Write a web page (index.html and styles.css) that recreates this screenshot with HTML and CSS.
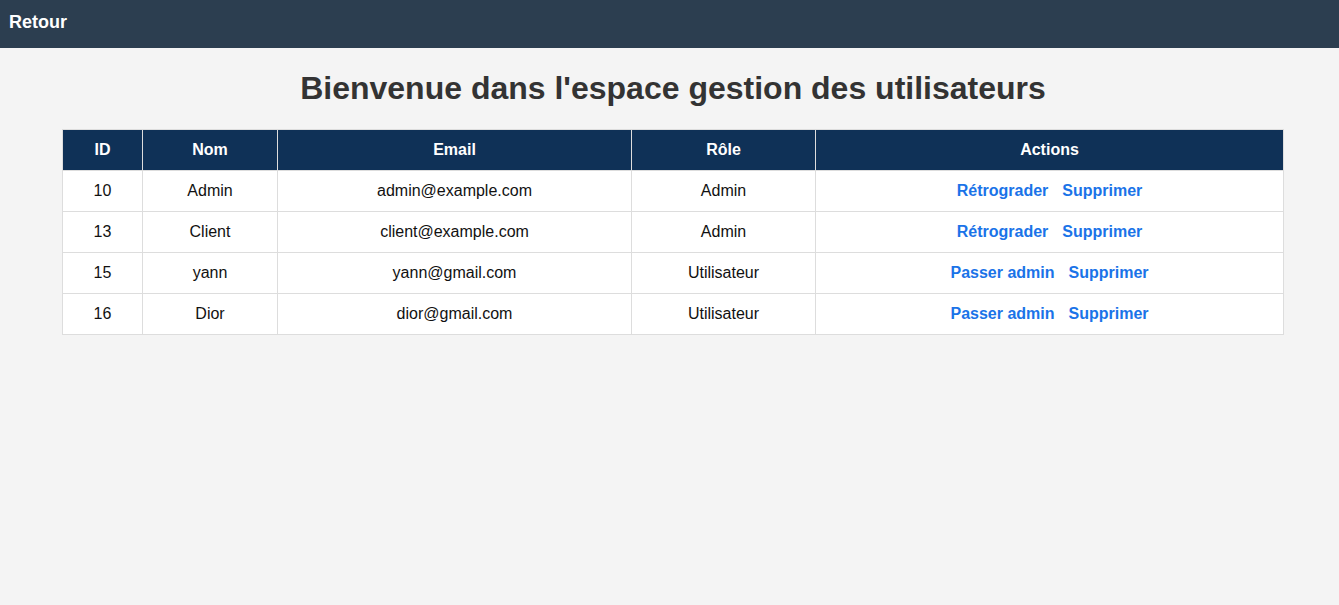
FILE: index.html
```html
<!DOCTYPE html>
<html lang="fr">
<head>
<meta charset="utf-8">
<title>Gestion des utilisateurs</title>
<link rel="stylesheet" href="styles.css">
</head>
<body>
<header class="topbar"><a class="back" href="#">Retour</a></header>
<main class="content">
  <h1 class="title">Bienvenue dans l'espace gestion des utilisateurs</h1>
  <table class="users">
    <colgroup>
      <col class="c-id"><col class="c-nom"><col class="c-email"><col class="c-role"><col class="c-actions">
    </colgroup>
    <thead>
      <tr><th>ID</th><th>Nom</th><th>Email</th><th>Rôle</th><th>Actions</th></tr>
    </thead>
    <tbody>
      <tr><td>10</td><td>Admin</td><td>admin@example.com</td><td>Admin</td><td><a href="#" class="act">Rétrograder</a><a href="#" class="act">Supprimer</a></td></tr>
      <tr><td>13</td><td>Client</td><td>client@example.com</td><td>Admin</td><td><a href="#" class="act">Rétrograder</a><a href="#" class="act">Supprimer</a></td></tr>
      <tr><td>15</td><td>yann</td><td>yann@gmail.com</td><td>Utilisateur</td><td><a href="#" class="act">Passer admin</a><a href="#" class="act">Supprimer</a></td></tr>
      <tr><td>16</td><td>Dior</td><td>dior@gmail.com</td><td>Utilisateur</td><td><a href="#" class="act">Passer admin</a><a href="#" class="act">Supprimer</a></td></tr>
    </tbody>
  </table>
</main>
</body>
</html>
```
FILE: styles.css
```css
* { box-sizing: border-box; }
html, body { margin: 0; padding: 0; }
body {
  background: #f4f4f4;
  font-family: "Liberation Sans", Arial, sans-serif;
  color: #333;
}
.topbar {
  background: #2c3e50;
  height: 48px;
  display: flex;
  align-items: center;
  padding: 0 9px 4px;
}
.back {
  color: #fff;
  font-weight: bold;
  font-size: 18px;
  text-decoration: none;
}
.content {
  padding: 0 55px 0 62px;
}
.title {
  margin: 22px 0 22px;
  text-align: center;
  font-size: 32px;
  line-height: 37px;
  font-weight: bold;
  color: #333;
}
.users {
  width: 100%;
  border-collapse: collapse;
  table-layout: fixed;
  background: #fff;
  font-size: 16px;
}
.c-id { width: 80px; }
.c-nom { width: 135px; }
.c-email { width: 354px; }
.c-role { width: 184px; }
.users th, .users td {
  border: 1px solid #ddd;
  text-align: center;
  padding: 0 8px;
  height: 41px;
}
.users th {
  background: #0f3157;
  color: #fff;
  font-weight: bold;
}
.users td { color: #111; }
.act {
  color: #1a73e8;
  font-weight: bold;
  text-decoration: none;
  margin: 0 7px;
}
```
